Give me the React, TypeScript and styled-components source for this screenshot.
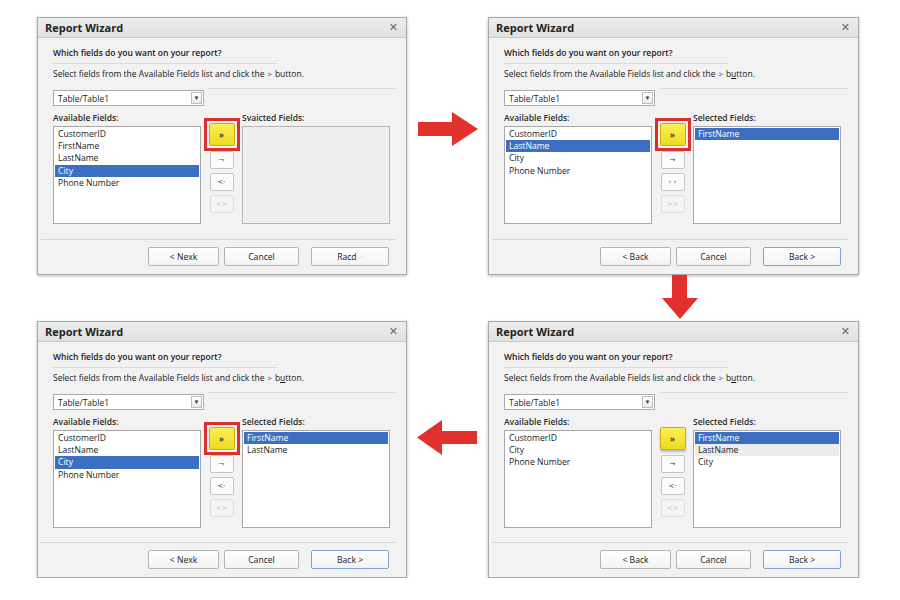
import React from "react";
import styled, { createGlobalStyle } from "styled-components";

type ItemState = "active" | "soft" | undefined;

interface IListItem {
  text: string;
  state?: ItemState;
}

interface IPanel {
  selectedLabel: string;
  glyphs: [string, string, string];
  available: IListItem[];
  selected: IListItem[];
  selectedDisabled?: boolean;
  framed: boolean;
  buttons: [string, string, string];
  defaultLast: boolean;
  underlined: boolean;
  trailingDot?: boolean;
}

const panels: IPanel[] = [
  {
    selectedLabel: "Svaicted Fields:",
    glyphs: ["⇁", "<·", "<>"],
    available: [
      { text: "CustomerID" },
      { text: "FirstName" },
      { text: "LastName" },
      { text: "City", state: "active" },
      { text: "Phone Number" },
    ],
    selected: [],
    selectedDisabled: true,
    framed: true,
    buttons: ["< Nexk", "Cancel", "Racd"],
    defaultLast: false,
    underlined: false,
    trailingDot: true,
  },
  {
    selectedLabel: "Selected Fields:",
    glyphs: ["→", "› ›", ">>"],
    available: [
      { text: "CustomerID" },
      { text: "LastName", state: "active" },
      { text: "City" },
      { text: "Phone Number" },
    ],
    selected: [{ text: "FirstName", state: "active" }],
    framed: true,
    buttons: ["< Back", "Cancel", "Back >"],
    defaultLast: true,
    underlined: true,
  },
  {
    selectedLabel: "Selected Fields:",
    glyphs: ["⇁", "<·", "<>"],
    available: [
      { text: "CustomerID" },
      { text: "LastName" },
      { text: "City", state: "active" },
      { text: "Phone Number" },
    ],
    selected: [{ text: "FirstName", state: "active" }, { text: "LastName" }],
    framed: true,
    buttons: ["< Nexk", "Cancel", "Back >"],
    defaultLast: true,
    underlined: true,
  },
  {
    selectedLabel: "Selected Fields:",
    glyphs: ["→", "<·", "<>"],
    available: [{ text: "CustomerID" }, { text: "City" }, { text: "Phone Number" }],
    selected: [
      { text: "FirstName", state: "active" },
      { text: "LastName", state: "soft" },
      { text: "City" },
    ],
    framed: false,
    buttons: ["< Back", "Cancel", "Back >"],
    defaultLast: true,
    underlined: true,
  },
];

const GlobalStyle = createGlobalStyle`
  body {
    margin: 0;
    background: #ffffff;
    font-family: "Open Sans", "Liberation Sans", sans-serif;
    color: #1a1a1a;
  }
`;

const Page = styled.div`
  display: grid;
  grid-template-columns: 370px 81px 371px;
  grid-template-rows: 258px 46px 257px;
  padding: 17px 0 0 37px;
`;

const Dialog = styled.div`
  box-sizing: border-box;
  height: 100%;
  display: flex;
  flex-direction: column;
  background: #f2f2f2;
  border: 1px solid #a9a9a9;
  box-shadow: 0 1px 3px rgba(0, 0, 0, 0.28);
`;

const TitleBar = styled.div`
  height: 19px;
  display: flex;
  align-items: center;
  justify-content: space-between;
  padding: 0 8px 0 7px;
  background: linear-gradient(#ececec, #e1e1e1);
  border-bottom: 1px solid #c6c6c6;
`;

const Title = styled.span`
  font-size: 11px;
  font-weight: 700;
  color: #222;
`;

const Close = styled.span`
  font-family: "DejaVu Sans", sans-serif;
  font-size: 11px;
  color: #6a6a6a;
  line-height: 1;
`;

const Body = styled.div`
  padding: 9px 16px 0 15px;
`;

const Question = styled.div`
  font-size: 8.5px;
  font-weight: 600;
  line-height: 12px;
`;

const Rule = styled.div<{ $left: number; $width?: number }>`
  height: 1px;
  background: #dadada;
  margin-left: ${(p) => p.$left}px;
  margin-right: ${(p) => (p.$width ? 0 : -6)}px;
  width: ${(p) => (p.$width ? `${p.$width}px` : "auto")};
`;

const Hint = styled.div`
  font-size: 8.5px;
  line-height: 12px;
  margin-top: 4px;
`;

const SmallGt = styled.span`
  font-size: 7px;
  margin: 0 1px;
`;

const Combo = styled.div`
  box-sizing: border-box;
  width: 151px;
  height: 16px;
  margin-top: 1px;
  display: flex;
  align-items: center;
  justify-content: space-between;
  background: #fff;
  border: 1px solid #ababab;
  padding: 0 1px 0 4px;
  font-size: 8.5px;
`;

const ComboButton = styled.span`
  box-sizing: border-box;
  width: 11px;
  height: 12px;
  display: flex;
  align-items: center;
  justify-content: center;
  border: 1px solid #bdbdbd;
  background: linear-gradient(#fdfdfd, #ececec);
  font-size: 6px;
  color: #333;
`;

const Fields = styled.div`
  display: flex;
`;

const FieldColumn = styled.div`
  width: 148px;
`;

const FieldLabel = styled.div`
  box-sizing: border-box;
  height: 20px;
  padding-top: 6px;
  font-size: 8.5px;
  font-weight: 600;
  line-height: 12px;
  color: #2a2a2a;
`;

const List = styled.div<{ $disabled?: boolean }>`
  box-sizing: border-box;
  height: 98px;
  padding: 1px 1px 0;
  background: ${(p) => (p.$disabled ? "#efefef" : "#ffffff")};
  border: 1px solid ${(p) => (p.$disabled ? "#b5b5b5" : "#a8a8a8")};
`;

const Item = styled.div<{ $state?: ItemState }>`
  height: 12.2px;
  line-height: 12.2px;
  padding-left: 3px;
  font-size: 8.6px;
  white-space: nowrap;
  color: ${(p) => (p.$state === "active" ? "#ffffff" : "#1a1a1a")};
  background: ${(p) =>
    p.$state === "active" ? "#3b6fc4" : p.$state === "soft" ? "#ececec" : "transparent"};
`;

const Mover = styled.div`
  width: 41px;
  padding-top: 12px;
  display: flex;
  flex-direction: column;
  align-items: center;
  gap: 4px;
`;

const Frame = styled.div<{ $on: boolean }>`
  padding: 2px;
  margin-bottom: -4px;
  border: 3px solid ${(p) => (p.$on ? "#d92f2f" : "transparent")};
`;

const AddAll = styled.div<{ $shadow: boolean }>`
  box-sizing: border-box;
  width: 26px;
  height: 23px;
  display: flex;
  align-items: center;
  justify-content: center;
  background: linear-gradient(#fcef52, #f0da1e);
  border: 1px solid #c7ae17;
  border-radius: 2px;
  font-size: 8px;
  font-weight: 700;
  color: #3a3a3a;
  box-shadow: ${(p) => (p.$shadow ? "0 2px 2px rgba(0,0,0,0.22)" : "none")};
`;

const MoveButton = styled.div<{ $disabled?: boolean }>`
  box-sizing: border-box;
  width: 24px;
  height: 18px;
  display: flex;
  align-items: center;
  justify-content: center;
  background: ${(p) => (p.$disabled ? "#f4f4f4" : "#fbfbfb")};
  border: 1px solid ${(p) => (p.$disabled ? "#dedede" : "#c6c6c6")};
  border-radius: 2px;
  font-family: "DejaVu Sans", sans-serif;
  font-size: 7px;
  color: ${(p) => (p.$disabled ? "#c4c4c4" : "#4a4a4a")};
`;

const Footer = styled.div`
  margin: auto 10px 0 3px;
  border-top: 1px solid #d6d6d6;
  padding: 7px 7px 8px 0;
  display: flex;
  justify-content: flex-end;
`;

const DialogButton = styled.div<{ $width: number; $default?: boolean; $gap: number }>`
  box-sizing: border-box;
  width: ${(p) => p.$width}px;
  height: 19px;
  margin-left: ${(p) => p.$gap}px;
  display: flex;
  align-items: center;
  justify-content: center;
  background: linear-gradient(#ffffff, #f3f3f3);
  border: 1px solid ${(p) => (p.$default ? "#7ea2d6" : "#b4b4b4")};
  border-radius: 2px;
  font-size: 8.6px;
  color: #1a1a1a;
`;

const Dot = styled.span`
  color: #c8c8c8;
  margin-left: 4px;
`;

const ArrowBox = styled.div<{ $top: number; $left: number }>`
  margin-top: ${(p) => p.$top}px;
  margin-left: ${(p) => p.$left}px;
  line-height: 0;
`;

const Wizard: React.FC<{ panel: IPanel }> = ({ panel }) => {
  const widths = [71, 75, 78];
  const gaps = [0, 5, 12];
  return (
    <Dialog>
      <TitleBar>
        <Title>Report Wizard</Title>
        <Close>✕</Close>
      </TitleBar>
      <Body>
        <Question>Which fields do you want on your report?</Question>
        <Rule $left={-1} $width={226} style={{ marginTop: 4 }} />
        <Hint>
          Select fields from the Available Fields list and click the <SmallGt>&gt;</SmallGt>{" "}
          {panel.underlined ? (
            <>
              b<u>u</u>tton.
            </>
          ) : (
            "button."
          )}
        </Hint>
        <Rule $left={155} style={{ marginTop: 7 }} />
        <Combo>
          Table/Table1
          <ComboButton>▼</ComboButton>
        </Combo>
        <Fields>
          <FieldColumn>
            <FieldLabel>Available Fields:</FieldLabel>
            <List>
              {panel.available.map((it) => (
                <Item key={it.text} $state={it.state}>
                  {it.text}
                </Item>
              ))}
            </List>
          </FieldColumn>
          <Mover>
            <Frame $on={panel.framed}>
              <AddAll $shadow={!panel.framed}>»</AddAll>
            </Frame>
            <MoveButton>{panel.glyphs[0]}</MoveButton>
            <MoveButton>{panel.glyphs[1]}</MoveButton>
            <MoveButton $disabled>{panel.glyphs[2]}</MoveButton>
          </Mover>
          <FieldColumn>
            <FieldLabel>{panel.selectedLabel}</FieldLabel>
            <List $disabled={panel.selectedDisabled}>
              {panel.selected.map((it) => (
                <Item key={it.text} $state={it.state}>
                  {it.text}
                </Item>
              ))}
            </List>
          </FieldColumn>
        </Fields>
      </Body>
      <Footer>
        {panel.buttons.map((label, i) => (
          <DialogButton
            key={label + i}
            $width={widths[i]}
            $gap={gaps[i]}
            $default={i === 2 && panel.defaultLast}
          >
            {label}
            {i === 2 && panel.trailingDot && <Dot>·</Dot>}
          </DialogButton>
        ))}
      </Footer>
    </Dialog>
  );
};

const RED = "#e1302d";

const App: React.FC = () => {
  return (
    <>
      <GlobalStyle />
      <Page>
        <Wizard panel={panels[0]} />
        <ArrowBox $top={95} $left={11}>
          <svg width="60" height="34" viewBox="0 0 60 34">
            <polygon points="0,10 34,10 34,0 60,17 34,34 34,24 0,24" fill={RED} />
          </svg>
        </ArrowBox>
        <Wizard panel={panels[1]} />
        <div />
        <div />
        <ArrowBox $top={0} $left={174}>
          <svg width="36" height="44" viewBox="0 0 36 44">
            <polygon points="10,0 25,0 25,23 36,23 18,44 0,23 10,23" fill={RED} />
          </svg>
        </ArrowBox>
        <Wizard panel={panels[2]} />
        <ArrowBox $top={99} $left={10}>
          <svg width="60" height="35" viewBox="0 0 60 35">
            <polygon points="0,17.5 25,0 25,11 60,11 60,24 25,24 25,35" fill={RED} />
          </svg>
        </ArrowBox>
        <Wizard panel={panels[3]} />
      </Page>
    </>
  );
};

export default App;
